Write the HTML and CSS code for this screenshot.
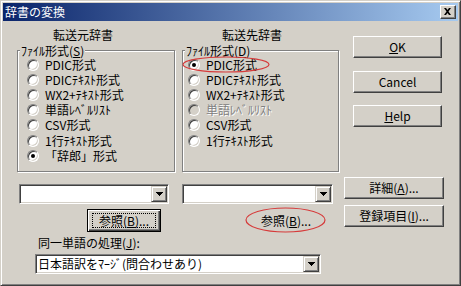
FILE: index.html
```html
<!DOCTYPE html>
<html lang="ja">
<head>
<meta charset="utf-8">
<title>辞書の変換</title>
<link rel="stylesheet" href="styles.css">
</head>
<body>
<div class="window">
  <div class="titlebar">
    <span class="title">辞書の変換</span>
    <span class="close"><svg width="16" height="14" viewBox="0 0 16 14"><path d="M4 3h2l1.5 2 1.5-2h2l-2.5 3.5 2.5 3.5h-2l-1.5-2-1.5 2h-2l2.5-3.5z" fill="#000"/></svg></span>
  </div>
  <div class="client">
    <div class="top">
      <div class="col col-src">
        <div class="head">転送元辞書</div>
        <div class="group">
          <div class="legend">ﾌｧｲﾙ形式(<u>S</u>)</div>
          <div class="opt"><span class="radio"></span><span class="lab">PDIC形式</span></div>
          <div class="opt"><span class="radio"></span><span class="lab">PDICﾃｷｽﾄ形式</span></div>
          <div class="opt"><span class="radio"></span><span class="lab">WX2+ﾃｷｽﾄ形式</span></div>
          <div class="opt"><span class="radio"></span><span class="lab">単語ﾚﾍﾞﾙﾘｽﾄ</span></div>
          <div class="opt"><span class="radio"></span><span class="lab">CSV形式</span></div>
          <div class="opt"><span class="radio"></span><span class="lab">1行ﾃｷｽﾄ形式</span></div>
          <div class="opt"><span class="radio on"></span><span class="lab">「辞郎」形式</span></div>
        </div>
      </div>
      <div class="col col-dst">
        <div class="head">転送先辞書</div>
        <div class="group">
          <div class="legend">ﾌｧｲﾙ形式(<u>D</u>)</div>
          <div class="opt"><span class="radio on"></span><span class="lab">PDIC形式</span></div>
          <div class="opt"><span class="radio"></span><span class="lab">PDICﾃｷｽﾄ形式</span></div>
          <div class="opt"><span class="radio"></span><span class="lab">WX2+ﾃｷｽﾄ形式</span></div>
          <div class="opt disabled"><span class="radio"></span><span class="lab">単語ﾚﾍﾞﾙﾘｽﾄ</span></div>
          <div class="opt"><span class="radio"></span><span class="lab">CSV形式</span></div>
          <div class="opt"><span class="radio"></span><span class="lab">1行ﾃｷｽﾄ形式</span></div>
        </div>
      </div>
      <div class="cmds">
        <div class="btn cmd"><u>O</u>K</div>
        <div class="btn cmd">Cancel</div>
        <div class="btn cmd"><u>H</u>elp</div>
      </div>
    </div>
    <div class="bottom">
      <div class="bl">
        <div class="combos">
          <div class="combo c1"><span class="val"></span><span class="drop"><svg width="7" height="4" viewBox="0 0 7 4"><path d="M0 0h7v1h-1v1h-1v1h-1v1h-1v-1h-1v-1h-1v-1h-1z" fill="#000"/></svg></span></div>
          <div class="combo c2"><span class="val"></span><span class="drop"><svg width="7" height="4" viewBox="0 0 7 4"><path d="M0 0h7v1h-1v1h-1v1h-1v1h-1v-1h-1v-1h-1v-1h-1z" fill="#000"/></svg></span></div>
        </div>
        <div class="refs">
          <div class="btn ref ref1 default"><span class="focus">参照(<u>B</u>)...</span></div>
          <div class="btn ref ref2">参照(<u>B</u>)...</div>
        </div>
        <div class="lbl">同一単語の処理(<u>J</u>):</div>
        <div class="combo wide"><span class="val">日本語訳をﾏｰｼﾞ(問合わせあり)</span><span class="drop"><svg width="7" height="4" viewBox="0 0 7 4"><path d="M0 0h7v1h-1v1h-1v1h-1v1h-1v-1h-1v-1h-1v-1h-1z" fill="#000"/></svg></span></div>
      </div>
      <div class="br">
        <div class="btn side">詳細(<u>A</u>)...</div>
        <div class="btn side">登録項目(<u>I</u>)...</div>
      </div>
    </div>
  </div>
  <svg class="marks" width="461" height="286" viewBox="0 0 461 286">
    <ellipse cx="226" cy="64.5" rx="43" ry="7.5"/>
    <ellipse cx="285.5" cy="220" rx="39.5" ry="12"/>
  </svg>
</div>
</body>
</html>
```

FILE: styles.css
```css
html, body {
  margin: 0;
  padding: 0;
  background: #d4d0c8;
}

body {
  font-family: "Noto Sans CJK JP", "Noto Sans", sans-serif;
  font-size: 12px;
  color: #000;
}

.window {
  position: relative;
  width: 461px;
  height: 286px;
  box-sizing: border-box;
  border: 1px solid;
  border-color: #d4d0c8 #404040 #404040 #d4d0c8;
  box-shadow: inset 1px 1px 0 #fff, inset -1px -1px 0 #808080;
  padding: 2px;
  background: #d4d0c8;
  overflow: hidden;
}

.titlebar {
  height: 18px;
  display: flex;
  align-items: center;
  justify-content: space-between;
  background: linear-gradient(to right, #0a246a, #a6caf0);
}

.title {
  color: #fff;
  font-size: 12px;
  line-height: 14px;
  padding-left: 2px;
}

.close {
  width: 16px;
  height: 14px;
  margin-right: 2px;
  box-sizing: border-box;
  background: #d4d0c8;
  border: 1px solid;
  border-color: #fff #404040 #404040 #fff;
  box-shadow: inset -1px -1px 0 #808080;
  display: flex;
}

.close svg {
  margin: -1px;
}

u {
  text-decoration: underline;
  text-underline-offset: 1px;
}

/* top part */
.top {
  display: flex;
  padding-left: 14px;
}

.col-src {
  width: 158px;
  --hp: 36px;
  --rp: 9px;
}

.col-dst {
  width: 157px;
  margin-left: 7px;
  --hp: 40px;
  --rp: 5px;
}

.head {
  margin-top: 7px;
  line-height: 14px;
  padding-left: var(--hp);
}

.group {
  margin-top: 8px;
  height: 122px;
  box-sizing: border-box;
  border: 1px solid #808080;
  box-shadow: inset 1px 1px 0 #fff, 1px 1px 0 #fff;
}

.legend {
  width: max-content;
  margin: -7px 0 0 2px;
  padding: 0 1px;
  line-height: 13px;
  background: #d4d0c8;
}

.opt {
  display: flex;
  align-items: center;
  height: 15.2px;
  padding-left: var(--rp);
  white-space: nowrap;
}

.radio {
  flex: none;
  width: 12px;
  height: 12px;
  box-sizing: border-box;
  border-radius: 50%;
  border: 1px solid;
  border-color: #808080 #fff #fff #808080;
  box-shadow: inset 1px 1px 0 #404040, inset -1px -1px 0 #d4d0c8;
  background: #fff;
  display: flex;
  align-items: center;
  justify-content: center;
}

.radio.on::after {
  content: "";
  width: 4px;
  height: 4px;
  border-radius: 50%;
  background: #000;
}

.lab {
  margin-left: 6px;
  line-height: 14px;
}

.disabled .radio {
  background: #d4d0c8;
}

.disabled .lab {
  color: #808080;
  text-shadow: 1px 1px 0 #fff;
}

.cmds {
  margin-left: 14px;
  padding-top: 15px;
  display: flex;
  flex-direction: column;
  gap: 12.5px;
}

/* buttons */
.btn {
  box-sizing: border-box;
  display: flex;
  align-items: center;
  justify-content: center;
  background: #d4d0c8;
  border: 1px solid;
  border-color: #fff #404040 #404040 #fff;
  box-shadow: inset -1px -1px 0 #808080;
  line-height: 14px;
  white-space: nowrap;
}

.cmd {
  width: 89px;
  height: 22px;
}

.side {
  width: 100px;
  height: 22px;
}

.ref {
  width: 74px;
  height: 23px;
}

.ref1 {
  margin-left: 68px;
}

.ref2 {
  margin-left: 88px;
  border-color: transparent;
  box-shadow: none;
}

.btn.default {
  border: 1px solid #000;
  box-shadow: inset 1px 1px 0 #fff, inset -1px -1px 0 #404040, inset -2px -2px 0 #808080;
}

.focus {
  box-sizing: border-box;
  width: 64px;
  height: 15px;
  border: 1px dotted #000;
  display: flex;
  align-items: center;
  justify-content: center;
}

/* bottom part */
.bottom {
  display: flex;
  margin-top: 5px;
}

.bl {
  margin-left: 16px;
  padding-top: 7px;
  width: 314px;
}

.combos {
  display: flex;
  gap: 13px;
}

.combo {
  box-sizing: border-box;
  height: 20px;
  display: flex;
  align-items: stretch;
  background: #fff;
  border: 1px solid;
  border-color: #808080 #fff #fff #808080;
  box-shadow: inset 1px 1px 0 #404040, inset -1px -1px 0 #d4d0c8;
  padding: 1px;
}

.c1 {
  width: 150px;
}

.c2 {
  width: 151px;
}

.val {
  flex: 1;
  display: flex;
  align-items: center;
  padding-left: 1px;
  line-height: 14px;
  white-space: nowrap;
  overflow: hidden;
}

.drop {
  flex: none;
  width: 16px;
  box-sizing: border-box;
  background: #d4d0c8;
  border: 1px solid;
  border-color: #d4d0c8 #404040 #404040 #d4d0c8;
  box-shadow: inset 1px 1px 0 #fff, inset -1px -1px 0 #808080;
  display: flex;
  align-items: center;
  justify-content: center;
}

.refs {
  display: flex;
  margin-top: 5px;
}

.lbl {
  margin-top: 4px;
  line-height: 14px;
  padding-left: 19px;
}

.wide {
  margin: 4px 0 0 16px;
  width: 286px;
}

.br {
  margin-left: 11px;
  display: flex;
  flex-direction: column;
  gap: 6px;
}

.marks {
  position: absolute;
  left: -1px;
  top: -1px;
  pointer-events: none;
}

.marks ellipse {
  fill: none;
  stroke: #d63a3a;
  stroke-width: 1.2;
}
```
